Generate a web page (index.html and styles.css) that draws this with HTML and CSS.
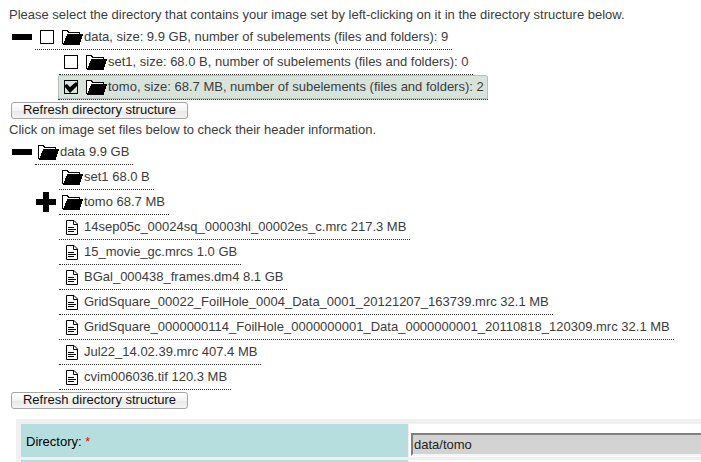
FILE: index.html
```html
<!DOCTYPE html>
<html lang="en">
<head>
<meta charset="utf-8">
<title>Image set directory</title>
<link rel="stylesheet" href="styles.css">
</head>
<body>
<svg class="defs" aria-hidden="true">
  <symbol id="folder" viewBox="0 0 21 16"><path d="M0 1h6v1h1v1h11v2h3v2h-1v3h-1v3h-1v3H1v-1H0z"/><path fill="#fff" d="M1 2h4v1h1v1h11v1H5v2H4v2H3v3H2v2H1z"/></symbol>
  <symbol id="file" viewBox="0 0 12 15"><path fill="#fff" d="M.5.5H8L11.500 4v10.500H.5z"/><path fill="none" stroke="#000" d="M.5.5H8L11.500 4v10.500H.5zM7.500.5v4h4M2 7.500h6M2 9.500h8M2 11.500h6"/></symbol>
  <symbol id="check" viewBox="0 0 14 14"><path d="M1 5l2-1 3 3 6-5 1 1v3l-7 7-5-6z"/></symbol>
</svg>
<p class="intro">Please select the directory that contains your image set by left-clicking on it in the directory structure below.</p>
<ul class="tree">
  <li><i class="toggle minus"></i><span class="row"><i class="box"></i><svg class="folder"><use href="#folder"/></svg><span class="label">data, size: 9.9 GB, number of subelements (files and folders): 9</span></span></li>
  <li class="child"><i class="toggle"></i><span class="row"><i class="box"></i><svg class="folder"><use href="#folder"/></svg><span class="label">set1, size: 68.0 B, number of subelements (files and folders): 0</span></span></li>
  <li class="child"><i class="toggle"></i><span class="row selected"><i class="box"><svg class="check"><use href="#check"/></svg></i><svg class="folder"><use href="#folder"/></svg><span class="label">tomo, size: 68.7 MB, number of subelements (files and folders): 2</span></span></li>
</ul>
<button class="refresh">Refresh directory structure</button>
<p class="hint">Click on image set files below to check their header information.</p>
<ul class="tree files">
  <li><i class="toggle minus"></i><span class="row"><svg class="folder"><use href="#folder"/></svg><span class="label">data 9.9 GB</span></span></li>
  <li class="child"><i class="toggle"></i><span class="row"><svg class="folder"><use href="#folder"/></svg><span class="label">set1 68.0 B</span></span></li>
  <li class="child"><i class="toggle minus plus"></i><span class="row"><svg class="folder"><use href="#folder"/></svg><span class="label">tomo 68.7 MB</span></span></li>
  <li class="child"><i class="toggle"></i><span class="row"><svg class="file"><use href="#file"/></svg><span class="label">14sep05c_00024sq_00003hl_00002es_c.mrc 217.3 MB</span></span></li>
  <li class="child"><i class="toggle"></i><span class="row"><svg class="file"><use href="#file"/></svg><span class="label">15_movie_gc.mrcs 1.0 GB</span></span></li>
  <li class="child"><i class="toggle"></i><span class="row"><svg class="file"><use href="#file"/></svg><span class="label">BGal_000438_frames.dm4 8.1 GB</span></span></li>
  <li class="child"><i class="toggle"></i><span class="row"><svg class="file"><use href="#file"/></svg><span class="label">GridSquare_00022_FoilHole_0004_Data_0001_20121207_163739.mrc 32.1 MB</span></span></li>
  <li class="child"><i class="toggle"></i><span class="row"><svg class="file"><use href="#file"/></svg><span class="label">GridSquare_0000000114_FoilHole_0000000001_Data_0000000001_20110818_120309.mrc 32.1 MB</span></span></li>
  <li class="child"><i class="toggle"></i><span class="row"><svg class="file"><use href="#file"/></svg><span class="label">Jul22_14.02.39.mrc 407.4 MB</span></span></li>
  <li class="child"><i class="toggle"></i><span class="row"><svg class="file"><use href="#file"/></svg><span class="label">cvim006036.tif 120.3 MB</span></span></li>
</ul>
<button class="refresh second">Refresh directory structure</button>
<div class="form">
  <div class="name">Directory: <b>*</b></div>
  <div class="value"><div class="input">data/tomo</div></div>
  <div class="name next"></div>
  <div class="value next"></div>
</div>
</body>
</html>
```
FILE: styles.css
```css
* { box-sizing: border-box; }
body {
  margin: 0;
  height: 462px;
  overflow: hidden;
  background: #fff;
  color: #3c3c3c;
  font: 13px/16px "Liberation Sans", Arial, sans-serif;
  white-space: nowrap;
}
.defs { position: absolute; width: 0; height: 0; }
p { margin: 0; padding-left: 9px; }
.intro { padding-top: 7px; height: 25px; }
.hint { height: 18px; margin-top: 3px; }
.tree { list-style: none; margin: 0; padding: 0 0 0 11px; }
.tree li { display: flex; height: 25px; }
.tree .child { padding-left: 24px; }
.toggle { flex: none; width: 24px; height: 25px; }
.minus { background: linear-gradient(#000, #000) 1px 9px / 20px 6px no-repeat; }
.plus {
  background: linear-gradient(#000, #000) 1px 9px / 20px 6px no-repeat,
    linear-gradient(#000, #000) 8px 2px / 6px 20px no-repeat;
}
.row {
  display: flex;
  height: 25px;
  padding: 0 4px 0 3px;
  border-bottom: 1px dotted #333;
}
.row > * { flex: none; }
.selected {
  margin-left: -1px;
  padding-left: 4px;
  background: #d8e3dc;
  box-shadow: inset 0 0 0 1px #b5c1b9;
  border-radius: 2px 2px 0 0;
}
.label { padding-top: 4px; margin-left: 1px; }
.box {
  width: 14px;
  height: 14px;
  margin: 5px 8px 0 2px;
  border: 1px solid #000;
}
.check { display: block; width: 14px; height: 14px; margin: -1px; }
.folder { width: 21px; height: 16px; margin-top: 4px; }
.file { width: 12px; height: 15px; margin: 5px 5px 0 4px; }
.refresh {
  display: block;
  width: 177px;
  height: 17px;
  margin: 2px 0 0 11px;
  padding: 0 0 1px;
  border: 1px solid #a5a5a5;
  border-radius: 3px;
  background: linear-gradient(#fff, #f3f3f3 50%, #e8e8e8 51%, #f4f4f4);
  color: #111;
  font: 13px/14px "Liberation Sans", Arial, sans-serif;
}
.form {
  display: grid;
  grid-template: 33px 10px / 387px 1fr;
  gap: 3px 1px;
  margin: 10px 0 0 16px;
  padding: 5px 0 0 5px;
  background: #f0f0f0;
}
.name { padding: 10px 5px; background: #b7dede; color: #000; }
.name b { color: #f00; font-weight: normal; }
.value { padding: 9px 0 0 2px; background: #fff; }
.input {
  height: 23px;
  padding: 2px 1px;
  border: 2px solid #808080;
  border-width: 2px 0 2px 2px;
  border-bottom-color: #f4f4f4;
  background: #d3d3d3;
  color: #222;
}
```
